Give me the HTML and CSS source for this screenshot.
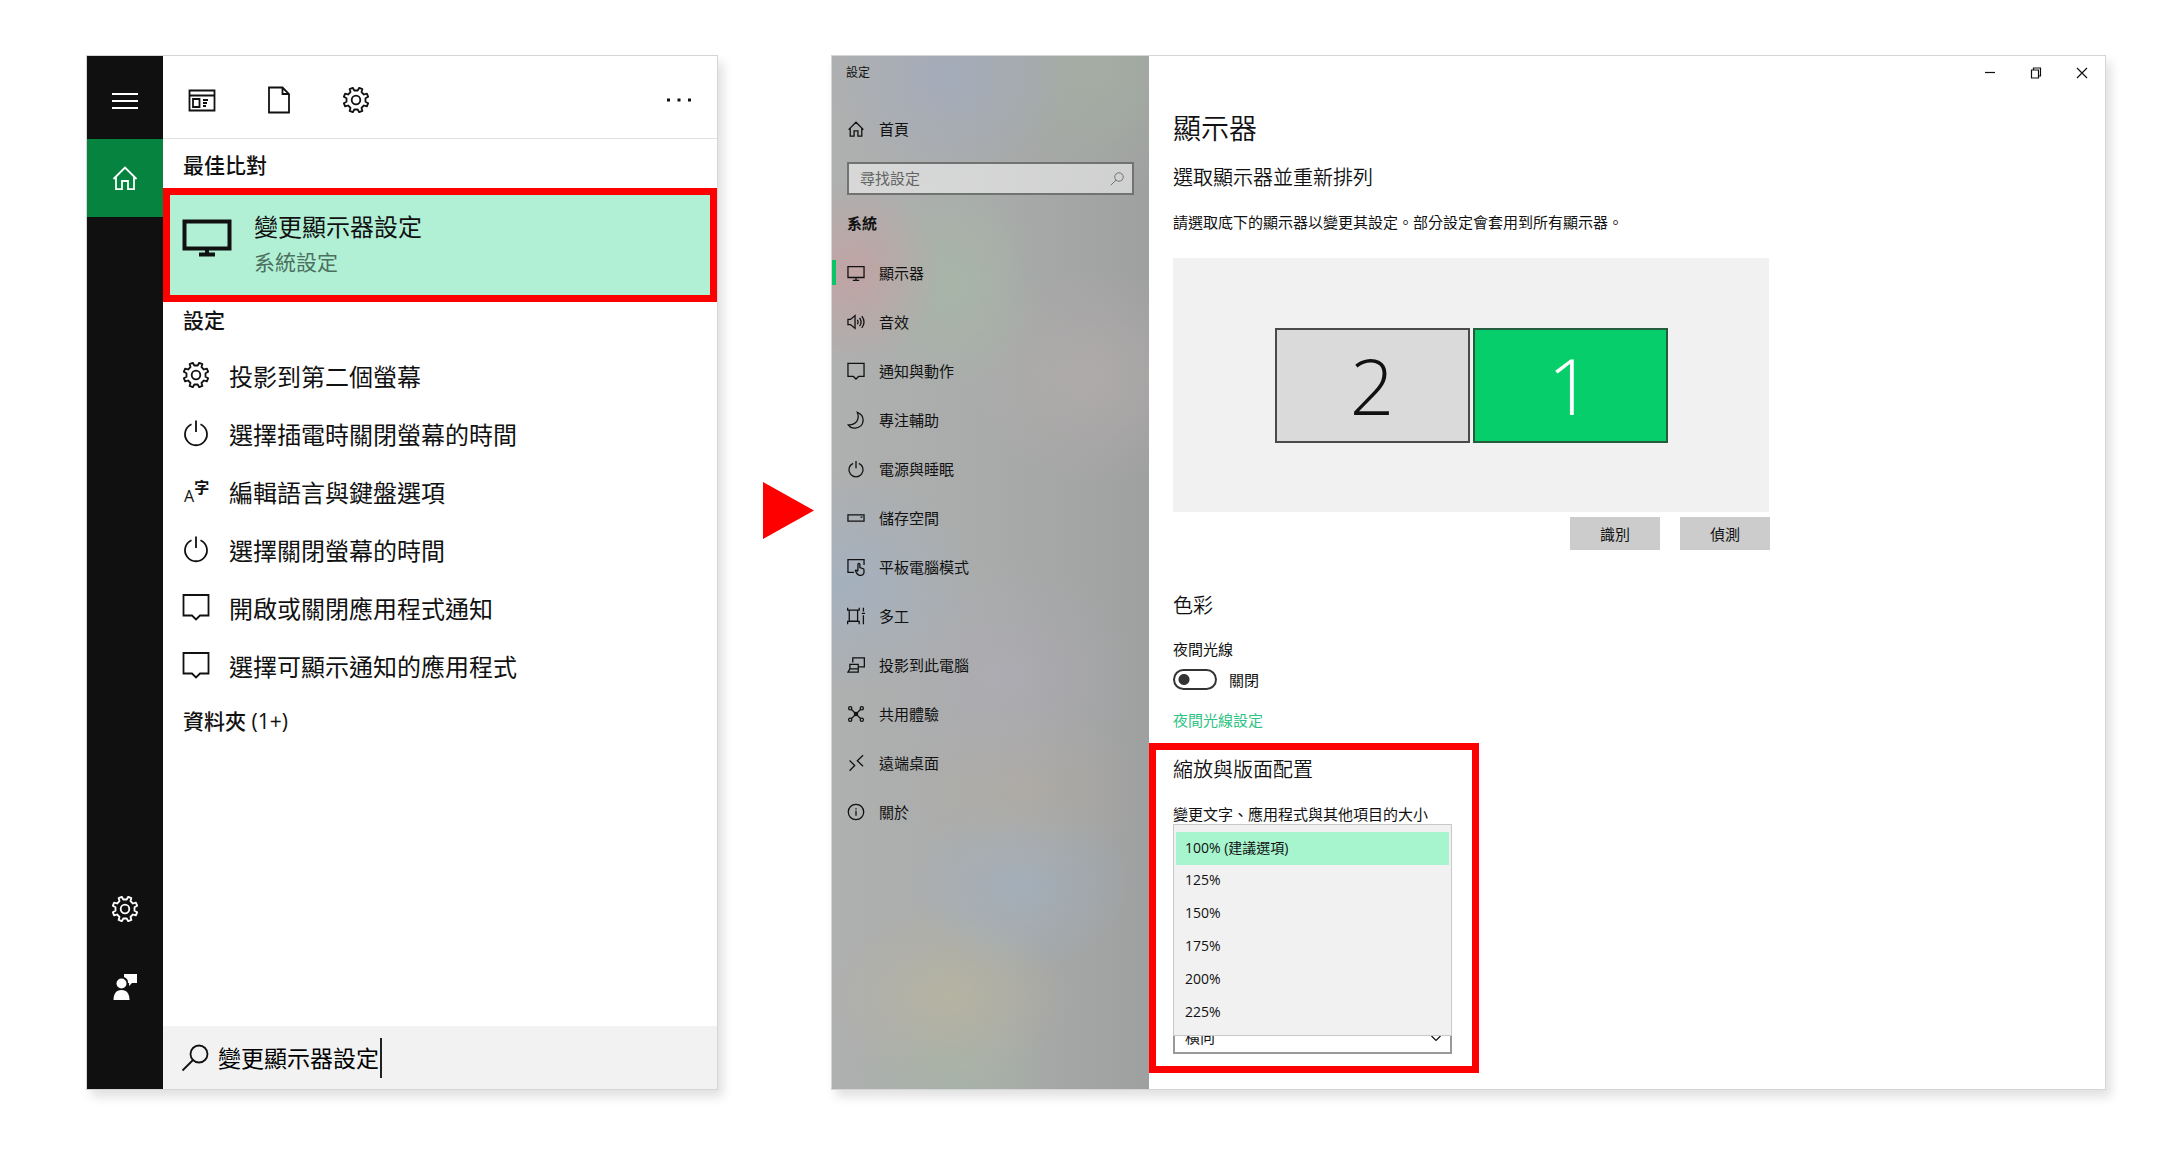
FILE: index.html
```html
<!DOCTYPE html>
<html lang="zh-Hant">
<head>
<meta charset="utf-8">
<title>變更顯示器設定</title>
<meta name="viewport" content="width=device-width, initial-scale=1">
<link rel="stylesheet" href="styles.css">
</head>
<body>
<svg class="defs" aria-hidden="true">
  <symbol id="gear" viewBox="-14 -14 28 28">
    <path stroke-linejoin="round" d="M1.7-9.5 3.2-12.2 6.4-10.9 5.5-7.9 7.9-5.5 10.9-6.4 12.2-3.2 9.5-1.7V1.7L12.2 3.2 10.9 6.4 7.9 5.5 5.5 7.9 6.4 10.9 3.2 12.2 1.7 9.5H-1.7L-3.2 12.2-6.4 10.9-5.5 7.9-7.9 5.5-10.9 6.4-12.2 3.2-9.5 1.7V-1.7L-12.2-3.2-10.9-6.4-7.9-5.5-5.5-7.9-6.4-10.9-3.2-12.2-1.7-9.5Z"/>
    <circle r="4.3"/>
  </symbol>
  <symbol id="home" viewBox="0 0 28 28">
    <path d="M2.5 15 14 3.5 25.5 15M5 13v12.200h6V17h6v8.200h6V13"/>
  </symbol>
  <symbol id="power" viewBox="0 0 28 28">
    <path d="M14 1.500V13M9.500 5.200A11 11 0 1 0 18.500 5.200"/>
  </symbol>
  <symbol id="note" viewBox="0 0 28 28">
    <path d="M1.500 2h25v20.500H18L14 26.500 10 22.500H1.500Z"/>
  </symbol>
  <symbol id="search" viewBox="0 0 28 28">
    <circle cx="18" cy="10" r="8.500"/><path d="M12 16 1.500 26.500"/>
  </symbol>
</svg>

<main class="stage">
  <section class="window start" aria-label="搜尋">
    <nav class="rail">
      <button class="rail-btn menu" aria-label="功能表"><svg class="icon" viewBox="0 0 28 28"><path d="M1 7h26M1 14h26M1 21h26"/></svg></button>
      <button class="rail-btn active" aria-label="首頁"><svg class="icon"><use href="#home"/></svg></button>
      <button class="rail-btn push" aria-label="設定"><svg class="icon"><use href="#gear"/></svg></button>
      <button class="rail-btn" aria-label="意見反應"><svg class="icon solid" viewBox="0 0 28 28"><path d="M13 1h13v9h-5l-3 3v-3h-1A6 6 0 0 0 13 4Z"/><circle cx="10.500" cy="10.500" r="5"/><path d="M2.500 27c0-6 2.500-10 8-10s8 4 8 10Z"/></svg></button>
    </nav>
    <div class="results">
      <header class="filters">
        <button class="filter" aria-label="應用程式"><svg class="icon" viewBox="0 0 28 28"><path d="M1.500 4.500h25v20h-25ZM1.500 9.500h25M5 13h6.500v8H5ZM15 14h5M15 17h4M15 20h3"/></svg></button>
        <button class="filter" aria-label="文件"><svg class="icon" viewBox="0 0 28 28"><path d="M4 1.500h13.500L24 8v18.500H4ZM17.500 1.500V8H24"/></svg></button>
        <button class="filter" aria-label="設定"><svg class="icon"><use href="#gear"/></svg></button>
        <button class="filter more" aria-label="更多"><svg class="icon solid" viewBox="0 0 28 28"><path d="M2 12.500h3v3H2zM12.500 12.500h3v3h-3zM23 12.500h3v3h-3z"/></svg></button>
      </header>
      <h2 class="group">最佳比對</h2>
      <a class="best" href="#display">
        <svg class="icon-monitor" viewBox="0 0 50 40"><path d="M2.500 3.500h45v27h-45ZM25 30v7M17 36.500h16"/></svg>
        <span class="best-text"><span class="best-title">變更顯示器設定</span><span class="best-sub">系統設定</span></span>
      </a>
      <h2 class="group settings">設定</h2>
      <ul class="list">
        <li><a href="#r1"><svg class="icon"><use href="#gear"/></svg>投影到第二個螢幕</a></li>
        <li><a href="#r2"><svg class="icon"><use href="#power"/></svg>選擇插電時關閉螢幕的時間</a></li>
        <li><a href="#r3"><span class="icon glyphs"><span class="latin">A</span><span class="han">字</span></span>編輯語言與鍵盤選項</a></li>
        <li><a href="#r4"><svg class="icon"><use href="#power"/></svg>選擇關閉螢幕的時間</a></li>
        <li><a href="#r5"><svg class="icon"><use href="#note"/></svg>開啟或關閉應用程式通知</a></li>
        <li><a href="#r6"><svg class="icon"><use href="#note"/></svg>選擇可顯示通知的應用程式</a></li>
      </ul>
      <h2 class="group folders">資料夾 (1+)</h2>
      <label class="query">
        <svg class="icon"><use href="#search"/></svg>
        <input type="text" value="變更顯示器設定" aria-label="搜尋">
        <span class="caret"></span>
      </label>
    </div>
  </section>

  <svg class="arrow" viewBox="0 0 51 57" aria-hidden="true"><path d="M0 0 51 28.500 0 57Z"/></svg>

  <section class="window config" aria-label="設定">
    <aside class="side">
      <p class="app-name">設定</p>
      <a class="side-link home" href="#home-page"><svg class="icon-s"><use href="#home"/></svg>首頁</a>
      <label class="find"><input type="text" placeholder="尋找設定" aria-label="尋找設定"><svg class="icon-find"><use href="#search"/></svg></label>
      <h2 class="side-title">系統</h2>
      <nav class="side-nav">
        <a class="side-link current" href="#display"><svg class="icon-s" viewBox="0 0 28 28"><path d="M1.500 4h25v17h-25ZM14 21v4M9 25.500h10"/></svg>顯示器</a>
        <a class="side-link" href="#sound"><svg class="icon-s" viewBox="0 0 28 28"><path d="M1.500 10v8h4l7 6V4l-7 6ZM16 10.500q2.500 3.500 0 7M19.500 7.500q5 6.500 0 13M23 5q7 9 0 18"/></svg>音效</a>
        <a class="side-link" href="#notify"><svg class="icon-s"><use href="#note"/></svg>通知與動作</a>
        <a class="side-link" href="#focus"><svg class="icon-s" viewBox="0 0 28 28"><path d="M16 2C29 7 28 25 13 26.500 8 27 4 24.500 2 21.500 15 22 20 12 16 2Z"/></svg>專注輔助</a>
        <a class="side-link" href="#power-page"><svg class="icon-s"><use href="#power"/></svg>電源與睡眠</a>
        <a class="side-link" href="#storage"><svg class="icon-s" viewBox="0 0 28 28"><path d="M1.500 9h25v10h-25ZM21 12.500h3"/></svg>儲存空間</a>
        <a class="side-link" href="#tablet"><svg class="icon-s" viewBox="0 0 28 28"><path d="M11 22.500H1.500v-20h25V11M17 20V9.500q1.500-2 3 0V15l6 2q2 9-4 10-6 1-9-8 2-1 4 2"/></svg>平板電腦模式</a>
        <a class="side-link" href="#multi"><svg class="icon-s" viewBox="0 0 28 28"><path d="M1 1v4h18V1M3.500 5v17h13V5M1 27v-4.500h18V27M25.500 1v6M25.500 13v14M23 10h5"/></svg>多工</a>
        <a class="side-link" href="#project"><svg class="icon-s" viewBox="0 0 28 28"><path d="M9 10V3h18v14h-9M4.500 13h13v7h-13ZM4.500 20 1.500 25h16v-5"/></svg>投影到此電腦</a>
        <a class="side-link" href="#shared"><svg class="icon-s" viewBox="0 0 28 28"><circle cx="5" cy="5" r="2.500"/><circle cx="23" cy="5" r="2.500"/><circle cx="5" cy="23" r="2.500"/><circle cx="23" cy="23" r="2.500"/><circle cx="14" cy="14" r="2.500"/><path d="M7 7 21 21M21 7 7 21"/></svg>共用體驗</a>
        <a class="side-link" href="#remote"><svg class="icon-s" viewBox="0 0 28 28"><path d="M4 10 12 18 4 26M25 2 16 10.500 25 19"/></svg>遠端桌面</a>
        <a class="side-link" href="#about"><svg class="icon-s" viewBox="0 0 28 28"><circle cx="14" cy="14" r="12"/><path d="M14 12v8M14 8v2"/></svg>關於</a>
      </nav>
    </aside>

    <div class="page">
      <header class="controls">
        <button aria-label="最小化"><svg class="icon-c" viewBox="0 0 12 12"><path d="M1 5.500h10"/></svg></button>
        <button aria-label="還原"><svg class="icon-c" viewBox="0 0 12 12"><path d="M1.500 3h7v8h-7ZM3.500 3V1h7v8H8.500"/></svg></button>
        <button aria-label="關閉"><svg class="icon-c" viewBox="0 0 12 12"><path d="M1 1 11 11M11 1 1 11"/></svg></button>
      </header>
      <div class="block">
        <h1>顯示器</h1>
        <h2 class="title arrange">選取顯示器並重新排列</h2>
        <p class="text intro">請選取底下的顯示器以變更其設定。部分設定會套用到所有顯示器。</p>
        <div class="screens">
          <button class="screen">2</button>
          <button class="screen main">1</button>
        </div>
        <div class="actions">
          <button>識別</button>
          <button>偵測</button>
        </div>
        <h2 class="title color">色彩</h2>
        <p class="text night" id="night">夜間光線</p>
        <label class="toggle"><input type="checkbox" aria-describedby="night">關閉</label>
        <a class="text link" href="#night-settings">夜間光線設定</a>
      </div>
      <section class="scale">
        <h2 class="title">縮放與版面配置</h2>
        <label class="scale-label" for="size">變更文字、應用程式與其他項目的大小</label>
        <select class="options" id="size" size="6">
          <option selected>100% (建議選項)</option>
          <option>125%</option>
          <option>150%</option>
          <option>175%</option>
          <option>200%</option>
          <option>225%</option>
        </select>
        <div class="direction">
          <select aria-label="方向"><option>橫向</option></select>
          <svg class="icon-c" viewBox="0 0 12 12"><path d="M1.500 4 6 8.500 10.500 4"/></svg>
        </div>
      </section>
    </div>
  </section>
</main>
</body>
</html>
```
FILE: styles.css
```css
* { box-sizing: border-box; }

body {
  margin: 0;
  background: #fff;
  color: #111;
  font-family: "Open Sans", "Noto Sans CJK TC", sans-serif;
  font-size: 15px;
}

h1, h2, p, ul { margin: 0; padding: 0; font-weight: 400; }
ul { list-style: none; }
a { color: inherit; text-decoration: none; }
button, input, select { font: inherit; color: inherit; margin: 0; }
button { border: 0; padding: 0; background: none; }

.defs { position: absolute; width: 0; height: 0; }

svg { fill: none; stroke: currentColor; flex: none; }
.icon { width: 28px; height: 28px; stroke-width: 1.8; }
.icon-s { width: 18px; height: 18px; stroke-width: 2; }
.icon-find { width: 14px; height: 14px; stroke-width: 2; }
.icon-c { width: 12px; height: 12px; stroke-width: 1.2; }
.solid { fill: currentColor; stroke: none; }

.stage {
  display: grid;
  grid-template-columns: minmax(0, 632fr) 113px minmax(0, 1275fr);
  min-height: 100vh;
  padding: 55px 69px 70px 86px;
}

.window {
  display: grid;
  border: 1px solid #d6d6d6;
  background: #fff;
  box-shadow: 5px 7px 10px rgba(0, 0, 0, .12);
}

.arrow {
  width: 51px;
  height: 57px;
  margin: 427px 0 0 45px;
  fill: #f00;
  stroke: none;
}

/* Search panel */
.start { grid-template-columns: 76px minmax(0, 1fr); }

.rail {
  display: flex;
  flex-direction: column;
  padding-bottom: 63px;
  background: #101010;
  color: #fff;
}
.rail-btn {
  display: flex;
  align-items: center;
  justify-content: center;
  height: 78px;
}
.rail-btn.menu { align-items: flex-end; height: 83px; padding-bottom: 24px; }
.rail-btn.active { background: #06843f; }
.push { margin-top: auto; }

.results { display: flex; flex-direction: column; }

.filters {
  display: flex;
  align-items: center;
  gap: 49px;
  height: 83px;
  padding: 6px 24px 0 25px;
  border-bottom: 1px solid #e2e2e2;
}
.filter { display: flex; }
.more { margin-left: auto; }

.group {
  padding: 4px 0 1px 20px;
  font-size: 21px;
  line-height: 44px;
  font-weight: 500;
}
.group.settings { padding: 0 0 0 20px; line-height: 36px; margin-bottom: 9px; }
.group.folders { padding: 0 0 0 20px; line-height: 52px; }

.best {
  display: flex;
  gap: 22px;
  height: 114px;
  padding: 12px;
  border: 7px solid #f00;
  background: #b2f0d6;
}
.icon-monitor { width: 50px; height: 40px; margin-top: 11px; stroke-width: 4; }
.best-text { display: flex; flex-direction: column; }
.best-title { font-size: 24px; line-height: 40px; }
.best-sub { font-size: 21px; line-height: 30px; color: #4c7060; }

.list a {
  display: flex;
  align-items: center;
  gap: 19px;
  height: 58px;
  padding: 0 0 2px 19px;
  font-size: 24px;
}
.glyphs { display: flex; flex: none; padding-left: 2px; line-height: 20px; }
.latin { padding-top: 9px; font-size: 16px; font-weight: 500; }
.han { font-size: 15px; font-weight: 700; }

.query {
  display: flex;
  align-items: center;
  height: 63px;
  margin-top: auto;
  padding-left: 18px;
  background: #f2f2f2;
}
.query input {
  width: 162px;
  margin-left: 9px;
  padding: 0 0 2px;
  border: 0;
  background: none;
  font-size: 23px;
  color: #000;
}
.caret { width: 2px; height: 40px; background: #222; }

/* Settings window */
.config { grid-template-columns: 317px minmax(0, 1fr); }

.side {
  background:
    radial-gradient(120px 100px at 37% 2%, #9fabc499, #9fabc400),
    radial-gradient(120px 130px at 85% 1%, #a6b4a499, #a6b4a400),
    radial-gradient(90px 90px at 6% 21%, #c79f9fbb, #c79f9f00),
    radial-gradient(90px 110px at 38% 22%, #a6baa6aa, #a6baa600),
    radial-gradient(120px 110px at 83% 31%, #bab0b088, #bab0b000),
    radial-gradient(130px 110px at 5% 51%, #a0b1c6aa, #a0b1c600),
    radial-gradient(130px 120px at 55% 60%, #afacb888, #afacb800),
    radial-gradient(120px 90px at 60% 71%, #b6ada377, #b6ada300),
    radial-gradient(110px 90px at 60% 80%, #a1b1c2aa, #a1b1c200),
    radial-gradient(120px 90px at 37% 91%, #bab79daa, #bab79d00),
    radial-gradient(110px 70px at 38% 99%, #a5b6a599, #a5b6a500),
    linear-gradient(90deg, #afb0b0, #a9abaa 50%, #9fa0a0);
}
.app-name { height: 34px; padding: 1px 0 0 14px; font-size: 12px; line-height: 32px; }

.side-link {
  display: flex;
  align-items: center;
  gap: 14px;
  height: 49px;
  padding-left: 15px;
}
.side-link.home { margin-top: 14px; }
.side-link.current {
  background: linear-gradient(#0ac566, #0ac566) 0 50% / 4px 25px no-repeat;
}

.find {
  display: flex;
  align-items: center;
  height: 33px;
  margin: 9px 15px 0;
  padding-right: 8px;
  border: 2px solid #707372;
  background: rgba(255, 255, 255, .5);
  color: #737575;
}
.find input {
  flex: 1;
  min-width: 0;
  padding: 0 0 2px 11px;
  border: 0;
  background: none;
}
.find input::placeholder { color: #626464; }
.side-title {
  margin: 13px 0 10px;
  padding-left: 15px;
  font-size: 15px;
  line-height: 30px;
  font-weight: 700;
}

.controls { display: flex; justify-content: flex-end; height: 34px; }
.controls button {
  display: flex;
  align-items: center;
  justify-content: center;
  width: 46px;
}

.block { display: flex; flex-direction: column; padding-left: 24px; }
h1 { margin-top: 18px; font-size: 28px; line-height: 40px; font-weight: 350; }
.title { font-size: 20px; line-height: 30px; font-weight: 350; }
.title.arrange { margin-top: 15px; }
.text { line-height: 24px; }
.intro { margin-top: 17px; }

.screens {
  display: flex;
  align-items: center;
  justify-content: center;
  gap: 3px;
  width: 596px;
  max-width: 100%;
  height: 254px;
  margin-top: 24px;
  background: #f1f1f1;
}
.screen {
  width: 195px;
  height: 115px;
  border: 2px solid #4a4a4a;
  background: #dadada;
  font-size: 78px;
  line-height: 104px;
  font-weight: 300;
}
.screen.main { background: #06ce6a; border-color: #245c3d; color: #fff; }

.actions {
  display: flex;
  justify-content: flex-end;
  gap: 20px;
  width: 597px;
  max-width: 100%;
  margin-top: 5px;
}
.actions button { width: 90px; height: 33px; background: #ccc; }

.title.color { margin-top: 41px; }
.night { margin-top: 16px; }
.toggle {
  display: flex;
  align-items: center;
  gap: 12px;
  height: 22px;
  margin-top: 7px;
}
.toggle input {
  appearance: none;
  width: 44px;
  height: 21px;
  border: 2px solid #333;
  border-radius: 11px;
  background: radial-gradient(circle at 9px 50%, #333 5px, transparent 6px);
}
.link { align-self: flex-start; margin-top: 18px; color: #2fc383; }

.scale {
  isolation: isolate;
  width: 330px;
  max-width: 100%;
  height: 330px;
  margin-top: 11px;
  padding: 5px 20px 0 17px;
  border: 7px solid #f00;
}
.scale-label { display: block; margin-top: 19px; line-height: 20px; white-space: nowrap; }
.options {
  display: block;
  position: relative;
  width: 279px;
  height: 212px;
  padding: 7px 2px 5px;
  border: 1px solid #c8c8c8;
  border-radius: 0;
  outline: 0;
  overflow: hidden;
  background: #f1f1f1;
  font-size: 14px;
}
.options option {
  height: 33px;
  min-height: 33px;
  padding: 5px 9px 0;
  line-height: 20px;
}
.options option:checked { background: #a7f5cf linear-gradient(#a7f5cf, #a7f5cf); color: #111; }

.direction { position: relative; z-index: -1; width: 279px; margin-top: -17px; }
.direction select {
  appearance: none;
  display: block;
  width: 100%;
  height: 35px;
  padding: 0 10px;
  border: 2px solid #999;
  border-radius: 0;
  background: #fff;
}
.direction svg { position: absolute; right: 10px; top: 13px; }
```
